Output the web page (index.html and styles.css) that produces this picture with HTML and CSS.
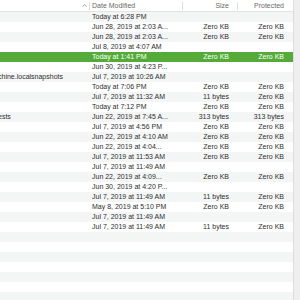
FILE: index.html
```html
<!DOCTYPE html>
<html>
<head>
<meta charset="utf-8">
<link rel="stylesheet" href="styles.css">
</head>
<body>
<div class="window">
  <div class="table">
    <div class="row head">
      <div class="cell name"><svg class="chev" width="5" height="3" viewBox="0 0 5 3"><path d="M0.5 2.6 L2.5 0.6 L4.5 2.6" fill="none" stroke="#8a8a8a" stroke-width="0.8"/></svg></div>
      <div class="cell date">Date Modified</div>
      <div class="cell size">Size</div>
      <div class="cell prot">Protected</div>
    </div>
    <div class="row"><div class="cell name"></div><div class="cell date">Today at 6:28 PM</div><div class="cell size"></div><div class="cell prot"></div></div>
    <div class="row"><div class="cell name"></div><div class="cell date">Jun 28, 2019 at 2:03 A...</div><div class="cell size">Zero KB</div><div class="cell prot">Zero KB</div></div>
    <div class="row"><div class="cell name"></div><div class="cell date">Jun 28, 2019 at 2:03 A...</div><div class="cell size">Zero KB</div><div class="cell prot">Zero KB</div></div>
    <div class="row"><div class="cell name"></div><div class="cell date">Jul 8, 2019 at 4:07 AM</div><div class="cell size"></div><div class="cell prot"></div></div>
    <div class="row selected"><div class="cell name"></div><div class="cell date">Today at 1:41 PM</div><div class="cell size">Zero KB</div><div class="cell prot">Zero KB</div></div>
    <div class="row"><div class="cell name"></div><div class="cell date">Jun 30, 2019 at 4:23 P...</div><div class="cell size"></div><div class="cell prot"></div></div>
    <div class="row"><div class="cell name">chine.localsnapshots</div><div class="cell date">Jul 7, 2019 at 10:26 AM</div><div class="cell size"></div><div class="cell prot"></div></div>
    <div class="row"><div class="cell name"></div><div class="cell date">Today at 7:06 PM</div><div class="cell size">Zero KB</div><div class="cell prot">Zero KB</div></div>
    <div class="row"><div class="cell name"></div><div class="cell date">Jul 7, 2019 at 11:32 AM</div><div class="cell size">11 bytes</div><div class="cell prot">Zero KB</div></div>
    <div class="row"><div class="cell name"></div><div class="cell date">Today at 7:12 PM</div><div class="cell size">Zero KB</div><div class="cell prot">Zero KB</div></div>
    <div class="row"><div class="cell name">ests</div><div class="cell date">Jun 22, 2019 at 7:45 A...</div><div class="cell size">313 bytes</div><div class="cell prot">313 bytes</div></div>
    <div class="row"><div class="cell name"></div><div class="cell date">Jul 7, 2019 at 4:56 PM</div><div class="cell size">Zero KB</div><div class="cell prot">Zero KB</div></div>
    <div class="row"><div class="cell name"></div><div class="cell date">Jun 22, 2019 at 4:10 AM</div><div class="cell size">Zero KB</div><div class="cell prot">Zero KB</div></div>
    <div class="row"><div class="cell name"></div><div class="cell date">Jun 22, 2019 at 4:04...</div><div class="cell size">Zero KB</div><div class="cell prot">Zero KB</div></div>
    <div class="row"><div class="cell name"></div><div class="cell date">Jul 7, 2019 at 11:53 AM</div><div class="cell size">Zero KB</div><div class="cell prot">Zero KB</div></div>
    <div class="row"><div class="cell name"></div><div class="cell date">Jul 7, 2019 at 11:49 AM</div><div class="cell size"></div><div class="cell prot"></div></div>
    <div class="row"><div class="cell name"></div><div class="cell date">Jun 22, 2019 at 4:09...</div><div class="cell size">Zero KB</div><div class="cell prot">Zero KB</div></div>
    <div class="row"><div class="cell name"></div><div class="cell date">Jun 30, 2019 at 4:20 P...</div><div class="cell size"></div><div class="cell prot"></div></div>
    <div class="row"><div class="cell name"></div><div class="cell date">Jul 7, 2019 at 11:49 AM</div><div class="cell size">11 bytes</div><div class="cell prot">Zero KB</div></div>
    <div class="row"><div class="cell name"></div><div class="cell date">May 8, 2019 at 5:10 PM</div><div class="cell size">Zero KB</div><div class="cell prot">Zero KB</div></div>
    <div class="row"><div class="cell name"></div><div class="cell date">Jul 7, 2019 at 11:49 AM</div><div class="cell size"></div><div class="cell prot"></div></div>
    <div class="row"><div class="cell name"></div><div class="cell date">Jul 7, 2019 at 11:49 AM</div><div class="cell size">11 bytes</div><div class="cell prot">Zero KB</div></div>
    <div class="row"></div>
    <div class="row"></div>
    <div class="row"></div>
    <div class="row"></div>
    <div class="row"></div>
    <div class="row"></div>
    <div class="row"></div>
  </div>
  <div class="strip"></div>
</div>
</body>
</html>
```

FILE: styles.css
```css
html, body {
  margin: 0;
  padding: 0;
  background: #ffffff;
}
.window {
  display: flex;
  width: 300px;
  height: 300px;
  overflow: hidden;
  font-family: "Liberation Sans", Arial, sans-serif;
  font-size: 7px;
  color: #2e2e2e;
}
.table {
  width: 293px;
  flex: none;
  display: flex;
  flex-direction: column;
}
.row {
  display: grid;
  grid-template-columns: 89px 93px 55px 56px;
  height: 10px;
  line-height: 10px;
  flex: none;
}
.row:nth-child(even) {
  background: #f4f5f5;
}
.row.selected {
  background: #55ab3a;
  color: #ffffff;
}
.cell {
  white-space: nowrap;
  overflow: hidden;
}
.name {
  text-indent: -2px;
}
.date {
  padding-left: 3px;
}
.size {
  text-align: right;
  padding-right: 8px;
}
.prot {
  text-align: right;
  padding-right: 9px;
}
.head {
  height: 12px;
  line-height: 8px;
  border-bottom: 1px solid #e3e3e3;
  box-sizing: border-box;
  background: #ffffff;
  color: #6a6a6a;
}
.head .cell {
  margin-top: 2px;
  height: 8px;
}
.head .date,
.head .size,
.head .prot {
  border-left: 1px solid #e0e0e0;
}
.head .date {
  padding-left: 2px;
}
.head .name {
  display: flex;
  justify-content: flex-end;
  align-items: center;
  padding-right: 2px;
  text-indent: 0;
}
.chev {
  display: block;
  margin-top: -2px;
}
.strip {
  flex: 1;
  background: #efefef;
  border-left: 1px solid #dddddd;
}
```
